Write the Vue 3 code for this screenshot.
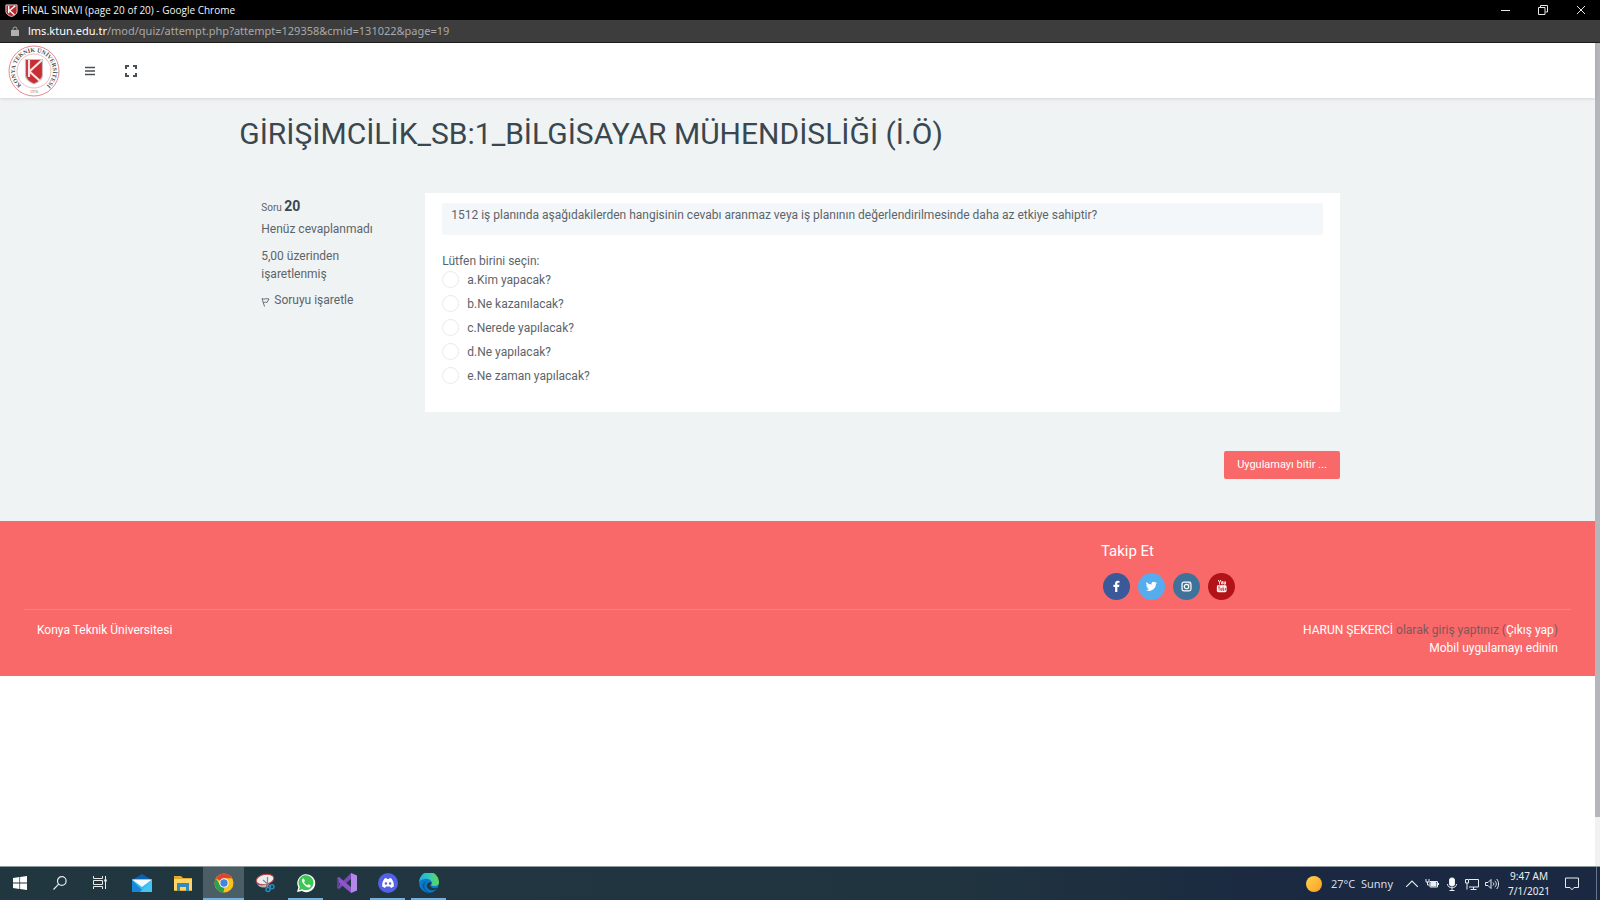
<script setup>
import { ref } from 'vue'

const answer = ref('')
const options = [
  { key: 'a', text: 'Kim yapacak?' },
  { key: 'b', text: 'Ne kazanılacak?' },
  { key: 'c', text: 'Nerede yapılacak?' },
  { key: 'd', text: 'Ne yapılacak?' },
  { key: 'e', text: 'Ne zaman yapılacak?' }
]
</script>

<template>
  <div class="screen">
    <div class="titlebar">
      <svg class="favicon" viewBox="0 0 14 14" aria-hidden="true">
        <path d="M1 1h12v7c0 3-3 4.500-6 5.500C4 12.500 1 11 1 8z" fill="#b8262b" stroke="#e8d6d6" />
        <path d="M4 2v8M11 2L5 7l5 4.500" fill="none" stroke="#fff" stroke-width="1.500" />
      </svg>
      <span class="window-title">FİNAL SINAVI (page 20 of 20) - Google Chrome</span>
      <div class="window-controls">
        <button type="button" aria-label="Minimize"><svg viewBox="0 0 10 10"><path d="M1 5.500h9" /></svg></button>
        <button type="button" aria-label="Restore"><svg viewBox="0 0 10 10"><path d="M.5 2.500h6.500v7H.5zM2.500 2.500v-2h7v6.500h-2" /></svg></button>
        <button type="button" aria-label="Close"><svg viewBox="0 0 10 10"><path d="M1 1l8 8M9 1l-8 8" /></svg></button>
      </div>
    </div>

    <div class="urlbar">
      <svg class="lock" viewBox="0 0 8 10" aria-hidden="true"><path d="M2 5V3a2 2 0 0 1 4 0v2" fill="none" stroke="#a5a5a5" /><path d="M0 4h8v6H0z" fill="#b0b0b0" /></svg>
      <span class="url"><b>lms.ktun.edu.tr</b>/mod/quiz/attempt.php?attempt=129358&amp;cmid=131022&amp;page=19</span>
    </div>

    <div class="viewport">
      <div class="page">
        <header class="header">
          <a class="logo" href="#" aria-label="Konya Teknik Üniversitesi">
            <svg viewBox="0 0 52 52">
              <defs><path id="seal-top" d="M15.100 41.600A19 19 0 1 1 36.900 41.600" /></defs>
              <circle cx="26" cy="26" r="25" fill="#fff" stroke="#e58c90" />
              <circle cx="26" cy="26" r="17" fill="none" stroke="#eba9ab" stroke-width=".8" />
              <text class="seal" text-anchor="middle"><textPath href="#seal-top" startOffset="50%">KONYA TEKNİK ÜNİVERSİTESİ</textPath></text>
              <text class="seal-year" x="26" y="48" text-anchor="middle">1970</text>
              <path d="M17.500 14.500h17v15.500c0 4.500-4 7-8.500 9-4.500-2-8.500-4.500-8.500-9z" fill="#c72d33" stroke="#c8bcbc" stroke-width="1.200" />
              <path d="M21 15v17M34 15L21.500 26.500 32 36" fill="none" stroke="#f6e4e4" stroke-width="2.200" />
            </svg>
          </a>
          <button class="icon-button" type="button" aria-label="Menü">
            <svg class="burger" viewBox="0 0 10 10"><path d="M0 1.500h10M0 5h10M0 8.500h10" /></svg>
          </button>
          <button class="icon-button" type="button" aria-label="Tam ekran">
            <svg class="expand" viewBox="0 0 12 12"><path d="M1 4V1h3M8 1h3v3M11 8v3H8M4 11H1V8" /></svg>
          </button>
        </header>

        <main class="main">
          <h1>GİRİŞİMCİLİK_SB:1_BİLGİSAYAR MÜHENDİSLİĞİ (İ.Ö)</h1>
          <div class="question">
            <aside class="info">
              <h2>Soru <strong>20</strong></h2>
              <p>Henüz cevaplanmadı</p>
              <p>5,00 üzerinden işaretlenmiş</p>
              <a class="flag" href="#">
                <svg viewBox="0 0 9 10" aria-hidden="true"><path d="M1 1.500l2.500 8M1 1.500c2 1.500 4-.5 7 .5L6 5.500c-2-1-2.500.5-4 0" /></svg>
                Soruyu işaretle
              </a>
            </aside>
            <section class="card">
              <p class="prompt">1512 iş planında aşağıdakilerden hangisinin cevabı aranmaz veya iş planının değerlendirilmesinde daha az etkiye sahiptir?</p>
              <fieldset class="answers">
                <legend>Lütfen birini seçin:</legend>
                <label v-for="o in options" :key="o.key" class="option">
                  <input v-model="answer" type="radio" name="answer" :value="o.key">
                  <span>{{ o.key }}.{{ o.text }}</span>
                </label>
              </fieldset>
            </section>
          </div>
          <div class="actions"><button class="finish" type="button">Uygulamayı bitir ...</button></div>
        </main>

        <footer class="footer">
          <div class="follow">
            <h3>Takip Et</h3>
            <nav class="social">
              <a class="facebook" href="#" aria-label="Facebook"><svg viewBox="0 0 14 14"><path d="M5.500 13V7.500H3.700V5.200h1.800V3.700C5.500 1.800 6.600.9 8.300.9l1.900.1v2H9c-.9 0-1.100.4-1.100 1v1.200h2.200l-.3 2.300H7.900V13z" /></svg></a>
              <a class="twitter" href="#" aria-label="Twitter"><svg viewBox="0 0 14 14"><path d="M13 3.200l-1.300 1.200c.2 5.500-6 9.200-10.700 6.300 1.400.1 2.500-.3 3.500-1-1.200-.1-2-.8-2.300-1.800h1.100C2 7.500 1.300 6.500 1.300 5.300l1.100.3C1.200 4.700 1 3.400 1.600 2.200 3 3.800 4.700 4.700 6.900 4.900 6.400 2.200 9.500.9 11 2.700L12.600 2l-1 1.400z" /></svg></a>
              <a class="instagram" href="#" aria-label="Instagram"><svg viewBox="0 0 14 14"><g fill="none" stroke="#fff" stroke-width="1.300"><rect x="2.200" y="2.200" width="9.600" height="9.600" rx="2" /><circle cx="7" cy="7" r="2.400" /></g><circle cx="9.900" cy="4.100" r=".7" /></svg></a>
              <a class="youtube" href="#" aria-label="YouTube"><svg viewBox="0 0 14 14"><path d="M3.500 0l1.400 2.800v2M6.300 0L4.900 2.800M7.200 1.800v2.500h1.200V1.800zM9.800 1.500v3h1.400v-3" fill="none" stroke="#fff" /><rect x="2" y="5.700" width="10.500" height="7.500" rx="1.500" /><path d="M3.200 7.500h2.400M4.400 7.500v4M6.200 8.500v2.700h1.200V8.500M8.600 7v4.300h.8V8.800M10.400 11h1V8.700h-.9" fill="none" stroke="#b31217" stroke-width=".7" /></svg></a>
            </nav>
          </div>
          <div class="footer-bottom">
            <a href="#">Konya Teknik Üniversitesi</a>
            <div class="login">
              <div><a href="#">HARUN ŞEKERCİ</a> olarak giriş yaptınız (<a href="#">Çıkış yap</a>)</div>
              <a href="#">Mobil uygulamayı edinin</a>
            </div>
          </div>
        </footer>
      </div>
      <div class="scrollbar"><div class="thumb"></div></div>
    </div>

    <div class="taskbar">
      <nav class="apps">
        <div class="system-group">
          <button class="system" type="button" aria-label="Start"><svg viewBox="0 0 14 14" width="14" height="14"><path d="M0 2l6.400-.9v5.500H0zM7.100 1L14 0v6.600H7.100zM0 7.400h6.400v5.500L0 12zM7.100 7.400H14V14l-6.900-1z" fill="#fff" /></svg></button>
          <button class="system" type="button" aria-label="Search"><svg viewBox="0 0 14 14" width="14" height="14" fill="none" stroke="#e6e9ea" stroke-width="1.200"><circle cx="8.800" cy="5" r="4.300" /><path d="M5.700 8.100L.5 13.500" /></svg></button>
          <button class="system" type="button" aria-label="Task View"><svg viewBox="0 0 14 14" width="14" height="14" fill="none" stroke="#e6e9ea"><path d="M.5 0v2.500h9V0M.5 13v-2.500h9V13M.5 4.500h9v4h-9zM12.500 0v13" /><path d="M11.200 4.500h2.600" stroke-width="2" /></svg></button>
        </div>
        <button type="button" aria-label="Mail"><svg viewBox="0 0 22 20" width="22" height="20"><path d="M1 7l10-6 10 6z" fill="#0961ad" /><path d="M1 6.500h20V19H1z" fill="#35b8ee" /><path d="M1 6.500h20L11 14z" fill="#f2f8fc" /><path d="M1 7l12 12H1z" fill="#1687d9" /><path d="M21 7L9 19h12z" fill="#42c5f2" /></svg></button>
        <button type="button" aria-label="File Explorer"><svg viewBox="0 0 20 18" width="20" height="18"><path d="M1 2h7l2 2h9v13H1z" fill="#e5a92d" /><path d="M1 5h18v11H1z" fill="#ffd569" /><path d="M4 9h12v8h-3v-4H7v4H4z" fill="#3489bd" /></svg></button>
        <button class="active" type="button" aria-label="Google Chrome"><svg viewBox="0 0 20 20" width="20" height="20"><circle cx="10" cy="10" r="9.500" fill="#fbc11d" /><path d="M10 10L1.800 5.200A9.500 9.500 0 0 1 18.200 5.200H10z" fill="#e04434" /><path d="M1.800 5.200L7 13.500 10.500 14 9.500 19.500A9.500 9.500 0 0 1 1.800 5.200z" fill="#2ca050" /><circle cx="10" cy="10" r="4.700" fill="#fff" /><circle cx="10" cy="10" r="3.700" fill="#4285dc" /></svg></button>
        <button type="button" aria-label="Snipping Tool"><svg viewBox="0 0 20 20" width="20" height="20"><ellipse cx="10" cy="6.500" rx="9" ry="5" transform="rotate(-12 10 6.500)" fill="#eceeed" stroke="#c33b40" /><path d="M1.500 10c2 2.500 6 3 10 1v3c-4 1.500-8 0-10-4z" fill="#b7b8b9" /><path d="M8 7l8 7M12.500 4v10" stroke="#7b8990" stroke-width="1.200" /><g fill="none" stroke="#268bc3" stroke-width="1.500"><circle cx="13" cy="16.500" r="2" /><circle cx="17" cy="13.800" r="2" /></g></svg></button>
        <button class="running" type="button" aria-label="WhatsApp"><svg viewBox="0 0 20 20" width="20" height="20"><path d="M1 19l1.300-4.600A9 9 0 1 1 5.800 18z" fill="#fff" /><path d="M2.800 17.200l1-3.300A7.500 7.500 0 1 1 6.300 16.200z" fill="#3cc653" /><path d="M7 5.500c-1.700.8-1.300 3 .2 5 2 2.900 4.700 4.700 6.600 3.700 1-.5 1.100-1.600.8-1.900l-2-1c-.8.2-.8 1.300-1.500 1-1.200-.4-2.600-1.900-3-3 .1-.6 1-.9.7-1.500L8 5.700C7.700 5.400 7.400 5.300 7 5.500z" fill="#fff" /></svg></button>
        <button type="button" aria-label="Visual Studio"><svg viewBox="0 0 20 20" width="20" height="20"><path d="M14 0l6 2.500v15L14 20z" fill="#b488e8" /><path d="M14 0L1.500 12.500 0 11.500V15l2 1L14 6z" fill="#774bb3" /><path d="M0 5l2-1 12 10v6L0 8z" fill="#8e55cb" /><path d="M0 5v10l2-1V6z" fill="#60409d" /></svg></button>
        <button class="running" type="button" aria-label="Discord"><svg viewBox="0 0 20 20" width="20" height="20"><circle cx="10" cy="10" r="10" fill="#5360e8" /><path d="M6.500 5.500L8.500 5l.5 1h2l.5-1 2 .5C15.300 8 16 10.500 15.800 13.500L13 15l-1-1.500H8L7 15l-2.800-1.500C4 10.500 4.700 8 6.500 5.500z" fill="#fff" /><circle cx="7.900" cy="10.500" r="1.200" fill="#5360e8" /><circle cx="12.100" cy="10.500" r="1.200" fill="#5360e8" /></svg></button>
        <button class="running" type="button" aria-label="Microsoft Edge"><svg viewBox="0 0 20 20" width="20" height="20"><defs><linearGradient id="edge-top" x1="0" x2="1"><stop offset="0" stop-color="#1caee6" /><stop offset=".5" stop-color="#30c8bf" /><stop offset="1" stop-color="#65d74c" /></linearGradient></defs><circle cx="10" cy="10" r="10" fill="#0b79cb" /><path d="M0 9A10 10 0 0 1 20 9c.3 4-5 5-7.500 3.200-.8-.6.3-1.200.2-2.700C12.300 5.500 4.500 4 0 9z" fill="url(#edge-top)" /><path d="M7.500 8.500C2 13 8 20 13 19.500 8 20.500 2 16 4 11c.6-1.300 2-2.300 3.500-2.500z" fill="#075a9d" /><path d="M12.700 9.500c-2-1-5 .5-5 3 0 4 5 6.500 10.500 3.500l1-1.300c-3 1-7 .5-8.200-2 0-1 1.600-1.700 1.700-3.200z" fill="#233842" /></svg></button>
      </nav>
      <div class="tray">
        <span class="sun"></span>
        <span class="weather">27°C&nbsp; Sunny</span>
        <svg class="caret" viewBox="0 0 12 12" aria-hidden="true"><path d="M1 8.500l5-5 5 5" /></svg>
        <svg viewBox="0 0 14 12" aria-hidden="true"><path d="M1 1v3h3V1M2.500 4v3h2M5 3.500h7.500v5.500H5zM13.500 5v2" /><path d="M6 4.500h5V8H6z" fill="#eee" /></svg>
        <svg viewBox="0 0 14 14" aria-hidden="true"><rect x="4.500" y="1" width="5" height="8" rx="2" fill="#fff" /><path d="M2.500 7c0 5 9 5 9 0M7 11v2.500M4.500 13.500h5" /></svg>
        <svg viewBox="0 0 14 12" aria-hidden="true"><path d="M4 1.500h9.500V9H4M8.500 9v2.500M5.500 11.500h6M.5 1.500h3V5h-3zM2 5v6.500" /></svg>
        <svg viewBox="0 0 14 12" aria-hidden="true"><path d="M.5 4.500H3l3-3v9l-3-3H.5zM8 4.500c1 1 1 2 0 3M9.800 2.800c2 2 2 4.400 0 6.400M11.700 1c2.500 3 2.500 7 0 10" /></svg>
        <time class="clock"><span>9:47 AM</span><span>7/1/2021</span></time>
        <button class="notifications" type="button" aria-label="Notifications"><svg viewBox="0 0 14 14"><path d="M.5 1h13v9.500H9l-2 2.300-2-2.300H.5z" /></svg></button>
      </div>
      <span class="show-desktop"></span>
    </div>
  </div>
</template>

<style>
html, body { margin: 0; }
</style>

<style scoped>
* { box-sizing: border-box; }
.screen { display: flex; flex-direction: column; min-height: 100vh; background: #fff; color: #5d6469; font: 12px/18px Roboto, sans-serif; }
h1, h2, h3, p { margin: 0; font-weight: 400; }
button { border: 0; padding: 0; background: none; font: inherit; color: inherit; cursor: pointer; }
a { color: inherit; text-decoration: none; }
svg { display: block; }

.titlebar { display: flex; align-items: center; height: 20px; padding-left: 5px; background: #000; color: #f4f4f4; font: 10px/20px "Open Sans", sans-serif; }
.favicon { width: 13px; height: 13px; margin-right: 4px; }
.window-controls { display: flex; margin-left: auto; }
.window-controls button { display: grid; place-items: center; width: 38px; height: 20px; }
.window-controls svg { width: 10px; height: 10px; fill: none; stroke: #e8e8e8; }

.urlbar { display: flex; align-items: center; height: 23px; padding-left: 11px; background: #3d3d3d; border-bottom: 1px solid #1c1c1c; color: #a9a9a9; font: 11px/22px "Noto Sans", sans-serif; }
.lock { width: 8px; height: 10px; margin-right: 9px; }
.url b { color: #fff; font-weight: 400; }

.viewport { display: flex; flex: 1; }
.page { flex: 1; min-width: 0; }
.scrollbar { width: 5px; background: #f1f1f3; }
.thumb { height: 94%; background: #b5b6bb; }

.header { position: relative; display: flex; align-items: center; height: 55px; padding-left: 8px; background: #fff; box-shadow: 0 1px 3px rgba(0, 0, 0, .12); color: #4b5054; }
.logo { width: 52px; height: 52px; margin-right: 9px; }
.logo svg { width: 52px; height: 52px; overflow: visible; }
.seal { font: 700 6px "Liberation Serif", serif; fill: #4f5154; }
.seal-year { font: 4px "Liberation Serif", serif; fill: #777; }
.icon-button { display: grid; place-items: center; width: 41px; height: 40px; }
.icon-button svg { fill: none; stroke: currentColor; }
.burger { width: 10px; height: 10px; stroke-width: 1.4; }
.expand { width: 12px; height: 12px; stroke-width: 2; }

.main { padding: 17px 16% 42px 15%; background: #eff3f4; }
h1 { color: #3a474e; font-size: 30px; line-height: 38px; }
.question { display: grid; grid-template-columns: 186px 1fr; margin-top: 40px; }
.info { padding: 4px 40px 0 22px; }
.info h2 { font-size: 10px; line-height: 18px; }
.info strong { color: #3a474e; font-size: 14px; font-weight: 700; }
.info p { margin: 3px 0 9px; }
.info p + p { margin: 0 0 8px; }
.flag { display: flex; align-items: center; gap: 4px; white-space: nowrap; }
.flag svg { width: 9px; height: 10px; margin-top: 4px; fill: none; stroke: #687075; }
.card { padding: 10px 17px 22px; background: #fff; }
.prompt { padding: 3px 9px 11px; background: #f3f7fa; border-radius: 2px; }
.answers { margin: 17px 0 0; padding: 0; border: 0; }
.answers legend { padding: 0; }
.option { display: flex; align-items: center; gap: 8px; height: 19px; margin-bottom: 5px; }
.option input { appearance: none; width: 17px; height: 17px; margin: 0; border: 1px solid #e6eaec; border-radius: 50%; background: #fff; }
.option input:checked { border: 5px solid #f96969; }
.actions { display: flex; justify-content: flex-end; margin-top: 39px; }
.finish { height: 28px; padding: 0 13px; border-radius: 2px; background: #f96969; color: #fff; font-size: 11px; }

.footer { padding: 20px 24px 8px; background: #f96969; color: #80575a; }
.follow { padding-bottom: 9px; margin-left: calc(70% - 6px); }
.follow h3 { color: #fff; font-size: 15px; line-height: 20px; }
.social { display: flex; gap: 8px; margin: 12px 0 0 2px; }
.social a { display: grid; place-items: center; width: 27px; height: 27px; border-radius: 50%; }
.social svg { width: 13px; height: 13px; fill: #fff; }
.facebook { background: #3b5998; }
.twitter { background: #55acee; }
.instagram { background: #3f729b; }
.youtube { background: #b31217; }
.footer-bottom { display: flex; justify-content: space-between; padding: 11px 13px; border-top: 1px solid #fb8080; }
.footer-bottom a { color: #fff; }
.login { text-align: right; }

.taskbar { display: flex; height: 34px; border-top: 1px solid #8e999e; background: linear-gradient(90deg, #21373f, #20343f 60%, #1a2841 82%); color: #eceff1; }
.apps { display: flex; gap: 6px; }
.apps button { display: grid; place-items: center; width: 35px; height: 33px; border-bottom: 2px solid transparent; }
.system-group { display: flex; margin-right: -2px; }
.apps .system { width: 40px; }
.apps .running { border-color: #76b0df; }
.apps .active { width: 41px; margin: 0 -3px; background: #4c5e65; border-color: #76b0df; }
.tray { display: flex; align-items: center; gap: 6px; margin-left: auto; font: 12px/16px "Noto Sans", sans-serif; }
.tray svg { width: 14px; height: 14px; fill: none; stroke: #e8edf2; }
.sun { width: 16px; height: 16px; border-radius: 50%; background: linear-gradient(135deg, #ffd44c, #fb9d22); }
.weather { margin: 0 6px 0 3px; color: #d6dce2; font-size: 11px; }
.clock { display: flex; flex-direction: column; width: 48px; font-size: 10px; line-height: 15px; text-align: center; }
.notifications { display: grid; place-items: center; width: 26px; height: 32px; }
.show-desktop { width: 4px; height: 33px; margin-left: 11px; border-left: 1px solid #66748a; }
</style>
